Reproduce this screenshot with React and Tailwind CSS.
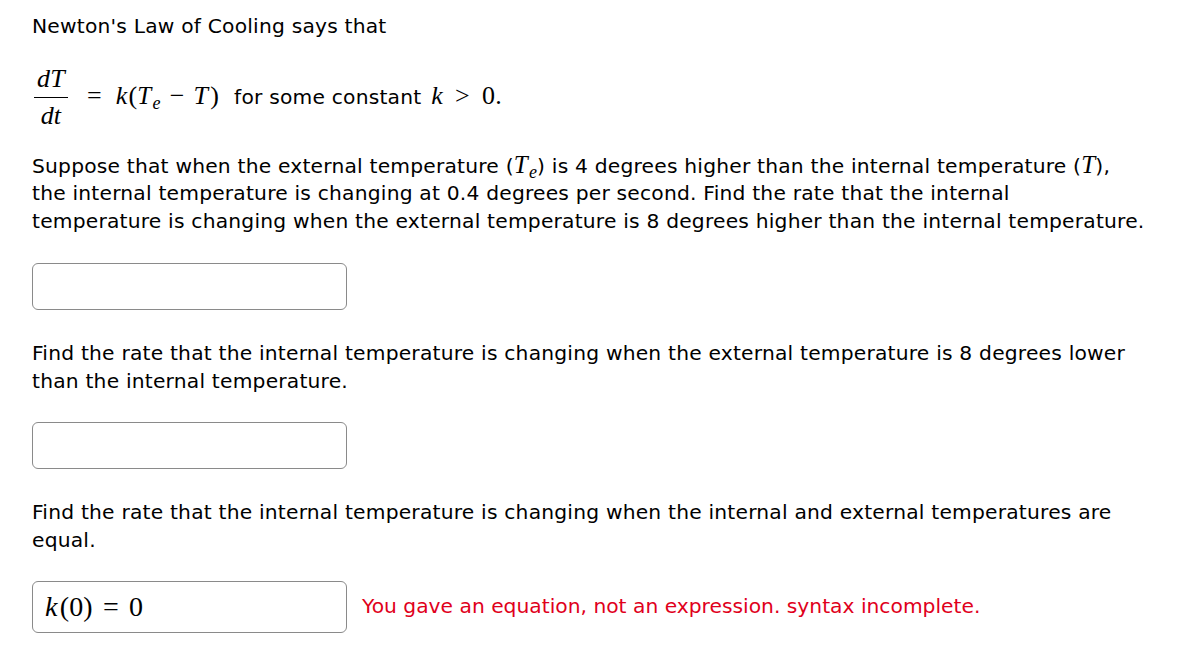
import React from 'react';

// math italic letter
function V({ children, className = 'text-[25px]' }) {
  return (
    <span className={"font-['Liberation_Serif',serif] italic leading-none " + className}>
      {children}
    </span>
  );
}

// math upright symbol
function R({ children, className = 'text-[25px]' }) {
  return (
    <span className={"font-['Liberation_Serif',serif] leading-none " + className}>
      {children}
    </span>
  );
}

function Te() {
  return (
    <span className="whitespace-nowrap">
      <V>T</V>
      <span className="font-['Liberation_Serif',serif] italic leading-none text-[18px] relative top-[5px] ml-[1px]">e</span>
    </span>
  );
}

function AnswerBox({ tall, children }) {
  return (
    <div
      className={
        'w-[315px] rounded-[6px] border border-[#8a8a8a] bg-white flex items-center px-3 ' +
        (tall ? 'h-[52px]' : 'h-[47px]')
      }
    >
      {children}
    </div>
  );
}

export default function App() {
  return (
    <div className="min-h-screen bg-white pl-8 pt-[13px] pr-4 text-black font-['DejaVu_Sans',sans-serif] text-[20.25px] leading-[27.5px] tracking-[0.2px]">
      <p>Newton's Law of Cooling says that</p>

      <div className="mt-[24px] flex items-center">
        <div className="inline-flex flex-col items-center ml-[2px]">
          <div className="h-[33px] flex items-end pb-[5px] px-[3px] border-b-[1.5px] border-black">
            <V className="text-[26px]">dT</V>
          </div>
          <div className="h-[32px] flex items-center pt-[4px] px-[3px]">
            <V className="text-[26px]">dt</V>
          </div>
        </div>
        <div className="ml-[19px] flex items-baseline">
          <R className="text-[26px]">=</R>
          <V className="text-[26px] ml-[14px]">k</V>
          <R className="text-[26px] ml-[1px]">(</R>
          <Te />
          <R className="text-[26px] mx-[9px]">−</R>
          <V className="text-[26px]">T</V>
          <R className="text-[26px] ml-[2px]">)</R>
          <span className="ml-[15px]">for some constant</span>
          <V className="text-[26px] ml-[10px]">k</V>
          <R className="text-[26px] mx-[12px]">&gt;</R>
          <R className="text-[26px]">0.</R>
        </div>
      </div>

      <p className="mt-[22px]">
        Suppose that when the external temperature (<Te />) is 4 degrees higher than the internal temperature (<V>T</V>),
        <br />
        the internal temperature is changing at 0.4 degrees per second. Find the rate that the internal
        <br />
        temperature is changing when the external temperature is 8 degrees higher than the internal temperature.
      </p>

      <div className="mt-[28px]">
        <AnswerBox />
      </div>

      <p className="mt-[30px]">
        Find the rate that the internal temperature is changing when the external temperature is 8 degrees lower
        <br />
        than the internal temperature.
      </p>

      <div className="mt-[27px]">
        <AnswerBox />
      </div>

      <p className="mt-[30px]">
        Find the rate that the internal temperature is changing when the internal and external temperatures are
        <br />
        equal.
      </p>

      <div className="mt-[27px] flex items-center">
        <AnswerBox tall>
          <span className="flex items-baseline text-[28px] font-['Liberation_Serif',serif]">
            <span className="italic">k</span>
            <span className="ml-[2px]">(0)</span>
            <span className="ml-[10px]">=</span>
            <span className="ml-[10px]">0</span>
          </span>
        </AnswerBox>
        <span className="ml-[15px] text-[#e0001b] tracking-normal">
          You gave an equation, not an expression. syntax incomplete.
        </span>
      </div>
    </div>
  );
}
